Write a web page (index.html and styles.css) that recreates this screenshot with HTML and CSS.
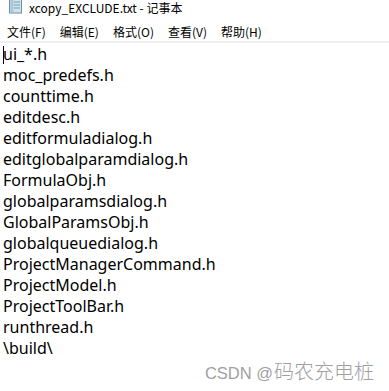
FILE: index.html
```html
<!DOCTYPE html>
<html lang="zh-CN">
<head>
  <meta charset="UTF-8" />
  <meta name="viewport" content="width=device-width, initial-scale=1.0" />
  <title>xcopy_EXCLUDE.txt - 记事本</title>
  <link rel="stylesheet" href="styles.css">
</head>
<body>
  <div class="window">
    <div class="title-bar">
      <svg class="app-icon" width="16" height="14" viewBox="0 0 16 14">
        <rect x="1.5" y="-2" width="12" height="15" fill="#cfe3ee" stroke="#6f8fa3" />
        <rect x="2.5" y="-1" width="3" height="13" fill="#a9c6d8" />
        <line x1="6" y1="2" x2="12" y2="2" stroke="#7f9db0" />
        <line x1="6" y1="5" x2="12" y2="5" stroke="#7f9db0" />
        <line x1="6" y1="8" x2="12" y2="8" stroke="#7f9db0" />
      </svg>
      <span class="title-text">xcopy_EXCLUDE.txt - 记事本</span>
    </div>
    <div class="menu-bar">
      <span class="menu-item">文件(F)</span>
      <span class="menu-item">编辑(E)</span>
      <span class="menu-item">格式(O)</span>
      <span class="menu-item">查看(V)</span>
      <span class="menu-item">帮助(H)</span>
    </div>
    <div class="editor">
      <div class="line"><span class="caret"></span>ui_*.h</div>
      <div class="line">moc_predefs.h</div>
      <div class="line">counttime.h</div>
      <div class="line">editdesc.h</div>
      <div class="line">editformuladialog.h</div>
      <div class="line">editglobalparamdialog.h</div>
      <div class="line">FormulaObj.h</div>
      <div class="line">globalparamsdialog.h</div>
      <div class="line">GlobalParamsObj.h</div>
      <div class="line">globalqueuedialog.h</div>
      <div class="line">ProjectManagerCommand.h</div>
      <div class="line">ProjectModel.h</div>
      <div class="line">ProjectToolBar.h</div>
      <div class="line">runthread.h</div>
      <div class="line">\build\</div>
    </div>
    <div class="watermark">CSDN @<span class="watermark-name">码农充电桩</span></div>
  </div>
</body>
</html>
```

FILE: styles.css
```css
body {
  margin: 0;
  background: #fff;
  font-family: "Noto Sans CJK SC", "Noto Sans", sans-serif;
  color: #000;
}
.window {
  position: relative;
  width: 389px;
  height: 391px;
  overflow: hidden;
}
.title-bar {
  display: flex;
  align-items: flex-start;
  height: 20px;
  padding-left: 8px;
}
.app-icon {
  margin-right: 5px;
}
.title-text {
  font-size: 12px;
  line-height: 16px;
}
.menu-bar {
  display: flex;
  gap: 14px;
  height: 21px;
  padding-left: 7px;
  border-bottom: 2px solid #f0f0f0;
  font-size: 12px;
  line-height: 24px;
}
.editor {
  padding: 1px 0 0 3px;
  font-family: "Noto Sans", "Noto Sans CJK SC", sans-serif;
  font-size: 16px;
  line-height: 21px;
}
.line {
  white-space: pre;
}
.caret {
  display: inline-block;
  width: 1px;
  height: 18px;
  margin: 2px -1px 0 0;
  vertical-align: top;
  background: #000;
}
.watermark {
  position: absolute;
  right: 15px;
  bottom: 6px;
  color: #a0a0a0;
  font-size: 16.5px;
  line-height: 24px;
  font-family: "Liberation Sans", "Noto Sans CJK SC", sans-serif;
}
.watermark-name {
  margin-left: 1px;
  font-family: "Noto Sans CJK SC", sans-serif;
  font-size: 20px;
  font-weight: 300;
}
```
